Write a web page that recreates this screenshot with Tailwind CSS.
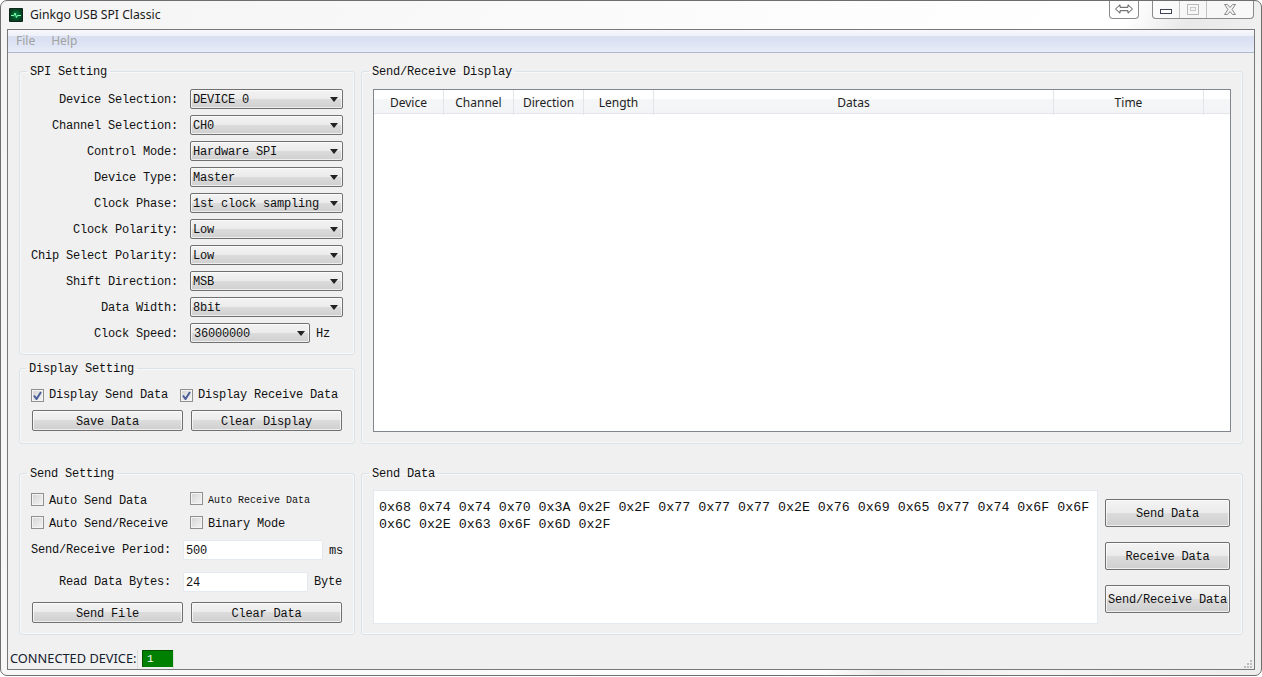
<!DOCTYPE html>
<html lang="en">
<head>
    <meta charset="UTF-8">
    <title>Ginkgo USB SPI Classic</title>
    <script src="https://cdn.jsdelivr.net/npm/@tailwindcss/browser@4"></script>
</head>
<body class="bg-white overflow-hidden">

<!-- Window frame -->
<div class="w-[1262px] h-[676px] border border-[#6e6e6e] rounded-[7px] flex flex-col overflow-hidden bg-[linear-gradient(115deg,#f4f4f4_0%,#fdfdfd_55%,#ffffff_72%,#e9e9e9_76%,#f6f6f6_85%,#ededed_100%)]">

    <!-- Title bar -->
    <div class="h-[28px] shrink-0 flex items-start text-[#1a1a1a] [font-family:'Noto_Sans',sans-serif]">
        <svg class="ml-[8px] mt-[7px]" width="14" height="14" viewBox="0 0 14 14">
            <defs><radialGradient id="lcd"><stop offset="0" stop-color="#0a8a48"/><stop offset="1" stop-color="#04401f"/></radialGradient></defs>
            <rect width="14" height="14" rx="1" fill="#10241a"/>
            <rect x="1" y="1" width="12" height="12" fill="url(#lcd)"/>
            <path d="M2 7.500h3l1-2.500 1.500 4.500 1-2h3.500" fill="none" stroke="#7dffb0" stroke-width="1"/>
        </svg>
        <span class="ml-[7px] mt-[5px] text-[12.2px] leading-[18px]">Ginkgo USB SPI Classic</span>
        <!-- Caption buttons -->
        <div class="ml-auto w-[30px] h-[19px] border border-t-0 border-[#8a8a8a] rounded-b-[4px] bg-white/60 flex items-center justify-center -mt-px">
            <svg width="18" height="10" viewBox="0 0 18 10"><path d="M.5 5 5 .8v2.500h8V.8L17.500 5 13 9.200V6.700H5v2.500z" fill="#fff" stroke="#555"/></svg>
        </div>
        <div class="ml-[13px] mr-[7px] w-[102px] h-[19px] border border-t-0 border-[#8a8a8a] rounded-b-[4px] bg-white/60 flex -mt-px">
            <div class="w-[27px] flex items-end justify-center pb-[4px] border-r border-[#c4c4c4]">
                <div class="w-[12px] h-[5px] border border-[#3d4456] bg-white"></div>
            </div>
            <div class="w-[27px] flex items-center justify-center border-r border-[#c4c4c4]">
                <div class="w-[12px] h-[11px] border border-[#b9b9b9] flex items-center justify-center">
                    <div class="w-[6px] h-[4px] border border-[#c8c8c8]"></div>
                </div>
            </div>
            <div class="flex-1 flex items-center justify-center">
                <svg width="12" height="11" viewBox="0 0 12 11"><path d="M.5.500h3L6 3.500 8.500.500h3L8 5.500l3.500 5h-3L6 7.500l-2.500 3h-3L4 5.500z" fill="#f4f4f4" stroke="#8a8a8a"/></svg>
            </div>
        </div>
    </div>

    <!-- Client area -->
    <div class="ml-[6px] w-[1248px] h-[641px] shrink-0 border border-[#787878] bg-[#f0f0f0] flex flex-col [font-family:'Liberation_Mono',monospace] text-[12px] tracking-[-0.2px] text-[#111]">

        <!-- Menu bar -->
        <div class="h-[23px] shrink-0 border-b border-[#b0b8cf] bg-[linear-gradient(#f6f8fc_0%,#eef1f9_25%,#d8dff2_30%,#dfe5f5_70%,#e8edf8_100%)] flex items-center gap-[16px] pl-[8px] pb-[1px] text-[12px] tracking-normal text-[#a2a2a2] [font-family:'Noto_Sans',sans-serif]">
            <span>File</span>
            <span>Help</span>
        </div>

        <div class="grid grid-cols-[336px_882px] gap-x-[6px] grid-rows-[380px_169px] gap-y-[22px] pl-[11px] pt-[11px]">

            <!-- Left column: SPI + Display -->
            <div class="flex flex-col gap-[6px]">
                <fieldset class="h-[291px] border border-[#d9e3ea] rounded-[3px] shadow-[inset_0_0_0_1px_#f8f8f8]">
                    <legend class="ml-[7px] px-[3px] h-[14px] leading-[16px]">SPI Setting</legend>
                    <div class="flex flex-col gap-[6px] pt-[11px]">
                        <div class="flex items-center"><label class="w-[158px] pt-[2px] text-right">Device Selection:</label><div class="ml-[12px] w-[153px] h-[20px] pl-[2px] pt-[2px] flex items-center justify-between border border-[#707070] rounded-[2px] bg-[linear-gradient(#f3f3f3,#ebebeb_50%,#dcdcdc_50%,#cfcfcf)] shadow-[inset_0_0_0_1px_#ffffffaa]">DEVICE 0<svg class="mr-[4px] -mt-[2px]" width="8" height="5" viewBox="0 0 8 5"><path d="M0 0h8L4 5z" fill="#222"/></svg></div></div>
                        <div class="flex items-center"><label class="w-[158px] pt-[2px] text-right">Channel Selection:</label><div class="ml-[12px] w-[153px] h-[20px] pl-[2px] pt-[2px] flex items-center justify-between border border-[#707070] rounded-[2px] bg-[linear-gradient(#f3f3f3,#ebebeb_50%,#dcdcdc_50%,#cfcfcf)] shadow-[inset_0_0_0_1px_#ffffffaa]">CH0<svg class="mr-[4px] -mt-[2px]" width="8" height="5" viewBox="0 0 8 5"><path d="M0 0h8L4 5z" fill="#222"/></svg></div></div>
                        <div class="flex items-center"><label class="w-[158px] pt-[2px] text-right">Control Mode:</label><div class="ml-[12px] w-[153px] h-[20px] pl-[2px] pt-[2px] flex items-center justify-between border border-[#707070] rounded-[2px] bg-[linear-gradient(#f3f3f3,#ebebeb_50%,#dcdcdc_50%,#cfcfcf)] shadow-[inset_0_0_0_1px_#ffffffaa]">Hardware SPI<svg class="mr-[4px] -mt-[2px]" width="8" height="5" viewBox="0 0 8 5"><path d="M0 0h8L4 5z" fill="#222"/></svg></div></div>
                        <div class="flex items-center"><label class="w-[158px] pt-[2px] text-right">Device Type:</label><div class="ml-[12px] w-[153px] h-[20px] pl-[2px] pt-[2px] flex items-center justify-between border border-[#707070] rounded-[2px] bg-[linear-gradient(#f3f3f3,#ebebeb_50%,#dcdcdc_50%,#cfcfcf)] shadow-[inset_0_0_0_1px_#ffffffaa]">Master<svg class="mr-[4px] -mt-[2px]" width="8" height="5" viewBox="0 0 8 5"><path d="M0 0h8L4 5z" fill="#222"/></svg></div></div>
                        <div class="flex items-center"><label class="w-[158px] pt-[2px] text-right">Clock Phase:</label><div class="ml-[12px] w-[153px] h-[20px] pl-[2px] pt-[2px] flex items-center justify-between border border-[#707070] rounded-[2px] bg-[linear-gradient(#f3f3f3,#ebebeb_50%,#dcdcdc_50%,#cfcfcf)] shadow-[inset_0_0_0_1px_#ffffffaa]">1st clock sampling<svg class="mr-[4px] -mt-[2px]" width="8" height="5" viewBox="0 0 8 5"><path d="M0 0h8L4 5z" fill="#222"/></svg></div></div>
                        <div class="flex items-center"><label class="w-[158px] pt-[2px] text-right">Clock Polarity:</label><div class="ml-[12px] w-[153px] h-[20px] pl-[2px] pt-[2px] flex items-center justify-between border border-[#707070] rounded-[2px] bg-[linear-gradient(#f3f3f3,#ebebeb_50%,#dcdcdc_50%,#cfcfcf)] shadow-[inset_0_0_0_1px_#ffffffaa]">Low<svg class="mr-[4px] -mt-[2px]" width="8" height="5" viewBox="0 0 8 5"><path d="M0 0h8L4 5z" fill="#222"/></svg></div></div>
                        <div class="flex items-center"><label class="w-[158px] pt-[2px] text-right">Chip Select Polarity:</label><div class="ml-[12px] w-[153px] h-[20px] pl-[2px] pt-[2px] flex items-center justify-between border border-[#707070] rounded-[2px] bg-[linear-gradient(#f3f3f3,#ebebeb_50%,#dcdcdc_50%,#cfcfcf)] shadow-[inset_0_0_0_1px_#ffffffaa]">Low<svg class="mr-[4px] -mt-[2px]" width="8" height="5" viewBox="0 0 8 5"><path d="M0 0h8L4 5z" fill="#222"/></svg></div></div>
                        <div class="flex items-center"><label class="w-[158px] pt-[2px] text-right">Shift Direction:</label><div class="ml-[12px] w-[153px] h-[20px] pl-[2px] pt-[2px] flex items-center justify-between border border-[#707070] rounded-[2px] bg-[linear-gradient(#f3f3f3,#ebebeb_50%,#dcdcdc_50%,#cfcfcf)] shadow-[inset_0_0_0_1px_#ffffffaa]">MSB<svg class="mr-[4px] -mt-[2px]" width="8" height="5" viewBox="0 0 8 5"><path d="M0 0h8L4 5z" fill="#222"/></svg></div></div>
                        <div class="flex items-center"><label class="w-[158px] pt-[2px] text-right">Data Width:</label><div class="ml-[12px] w-[153px] h-[20px] pl-[2px] pt-[2px] flex items-center justify-between border border-[#707070] rounded-[2px] bg-[linear-gradient(#f3f3f3,#ebebeb_50%,#dcdcdc_50%,#cfcfcf)] shadow-[inset_0_0_0_1px_#ffffffaa]">8bit<svg class="mr-[4px] -mt-[2px]" width="8" height="5" viewBox="0 0 8 5"><path d="M0 0h8L4 5z" fill="#222"/></svg></div></div>
                        <div class="flex items-center"><label class="w-[158px] pt-[2px] text-right">Clock Speed:</label><div class="ml-[12px] w-[120px] h-[20px] pl-[3px] pt-[2px] flex items-center justify-between border border-[#707070] rounded-[2px] bg-[linear-gradient(#f3f3f3,#ebebeb_50%,#dcdcdc_50%,#cfcfcf)] shadow-[inset_0_0_0_1px_#ffffffaa]">36000000<svg class="mr-[4px] -mt-[2px]" width="8" height="5" viewBox="0 0 8 5"><path d="M0 0h8L4 5z" fill="#222"/></svg></div><span class="ml-[6px] pt-[2px]">Hz</span></div>
                    </div>
                </fieldset>

                <fieldset class="h-[83px] border border-[#d9e3ea] rounded-[3px] shadow-[inset_0_0_0_1px_#f8f8f8]">
                    <legend class="ml-[6px] px-[3px] h-[14px] leading-[16px]">Display Setting</legend>
                    <div class="flex items-center pt-[11px] pl-[11px]">
                        <span class="w-[13px] h-[13px] border border-[#8e8f8f] bg-[linear-gradient(135deg,#d4d4d4,#f4f4f4)] shadow-[inset_0_0_0_1px_#f4f4f4] flex items-center justify-center"><svg width="9" height="9" viewBox="0 0 9 9"><path d="M1 4.500 3.500 8 8 1" fill="none" stroke="#4a5f97" stroke-width="2"/></svg></span>
                        <span class="ml-[5px] w-[131px]">Display Send Data</span>
                        <span class="w-[13px] h-[13px] border border-[#8e8f8f] bg-[linear-gradient(135deg,#d4d4d4,#f4f4f4)] shadow-[inset_0_0_0_1px_#f4f4f4] flex items-center justify-center"><svg width="9" height="9" viewBox="0 0 9 9"><path d="M1 4.500 3.500 8 8 1" fill="none" stroke="#4a5f97" stroke-width="2"/></svg></span>
                        <span class="ml-[5px]">Display Receive Data</span>
                    </div>
                    <div class="flex gap-[8px] pl-[12px] pt-[6px]">
                        <button class="w-[151px] h-[21px] pt-[2px] border border-[#707070] rounded-[2px] bg-[linear-gradient(#f3f3f3,#ebebeb_50%,#dcdcdc_50%,#cfcfcf)] shadow-[inset_0_0_0_1px_#ffffffaa]">Save Data</button>
                        <button class="w-[151px] h-[21px] pt-[2px] border border-[#707070] rounded-[2px] bg-[linear-gradient(#f3f3f3,#ebebeb_50%,#dcdcdc_50%,#cfcfcf)] shadow-[inset_0_0_0_1px_#ffffffaa]">Clear Display</button>
                    </div>
                </fieldset>
            </div>

            <!-- Send/Receive display -->
            <fieldset class="h-[380px] border border-[#d9e3ea] rounded-[3px] shadow-[inset_0_0_0_1px_#f8f8f8]">
                <legend class="ml-[7px] px-[3px] h-[14px] leading-[16px]">Send/Receive Display</legend>
                <div class="mt-[11px] ml-[11px] w-[858px] h-[343px] border border-[#82878f] bg-white">
                    <div class="grid grid-cols-[70px_70px_70px_70px_400px_150px_26px] h-[24px] border-b border-[#e4e6e9] bg-[linear-gradient(#fff_0%,#fff_40%,#f5f6f7_40%,#f3f4f6_100%)] text-center text-[12px] leading-[25px] tracking-normal text-[#1e1e1e] [font-family:'Noto_Sans',sans-serif]">
                        <div class="border-r border-[#e3e5e8]">Device</div>
                        <div class="border-r border-[#e3e5e8]">Channel</div>
                        <div class="border-r border-[#e3e5e8]">Direction</div>
                        <div class="border-r border-[#e3e5e8]">Length</div>
                        <div class="border-r border-[#e3e5e8]">Datas</div>
                        <div class="border-r border-[#e3e5e8]">Time</div>
                        <div></div>
                    </div>
                </div>
            </fieldset>

            <!-- Send setting -->
            <fieldset class="h-[169px] border border-[#d9e3ea] rounded-[3px] shadow-[inset_0_0_0_1px_#f8f8f8]">
                <legend class="ml-[7px] px-[3px] h-[14px] leading-[16px]">Send Setting</legend>
                <div class="flex items-center pt-[12px] pl-[11px] h-[27px]">
                    <span class="w-[13px] h-[13px] border border-[#8e8f8f] bg-[linear-gradient(135deg,#d4d4d4,#f4f4f4)] shadow-[inset_0_0_0_1px_#f4f4f4]"></span>
                    <span class="ml-[5px] w-[141px] pt-[2px]">Auto Send Data</span>
                    <span class="w-[13px] h-[13px] -mt-[2px] border border-[#8e8f8f] bg-[linear-gradient(135deg,#d4d4d4,#f4f4f4)] shadow-[inset_0_0_0_1px_#f4f4f4]"></span>
                    <span class="ml-[5px] pt-[1px] text-[10px] tracking-normal">Auto Receive Data</span>
                </div>
                <div class="flex items-center pt-[9px] pl-[11px] h-[22px]">
                    <span class="w-[13px] h-[13px] border border-[#8e8f8f] bg-[linear-gradient(135deg,#d4d4d4,#f4f4f4)] shadow-[inset_0_0_0_1px_#f4f4f4]"></span>
                    <span class="ml-[5px] w-[141px] pt-[2px]">Auto Send/Receive</span>
                    <span class="w-[13px] h-[13px] border border-[#8e8f8f] bg-[linear-gradient(135deg,#d4d4d4,#f4f4f4)] shadow-[inset_0_0_0_1px_#f4f4f4]"></span>
                    <span class="ml-[5px] pt-[2px]">Binary Mode</span>
                </div>
                <div class="flex items-center mt-[11px] h-[20px]">
                    <label class="w-[151px] text-right">Send/Receive Period:</label>
                    <div class="ml-[12px] w-[140px] h-[20px] pl-[2px] leading-[21px] bg-white border border-[#e3e9ef] rounded-[2px]">500</div>
                    <span class="ml-[6px] pt-[2px]">ms</span>
                </div>
                <div class="flex items-center mt-[12px] h-[20px]">
                    <label class="w-[151px] text-right">Read Data Bytes:</label>
                    <div class="ml-[12px] w-[125px] h-[20px] pl-[2px] leading-[21px] bg-white border border-[#e3e9ef] rounded-[2px]">24</div>
                    <span class="ml-[6px]">Byte</span>
                </div>
                <div class="flex gap-[8px] pl-[12px] pt-[10px]">
                    <button class="w-[151px] h-[21px] pt-[2px] border border-[#707070] rounded-[2px] bg-[linear-gradient(#f3f3f3,#ebebeb_50%,#dcdcdc_50%,#cfcfcf)] shadow-[inset_0_0_0_1px_#ffffffaa]">Send File</button>
                    <button class="w-[151px] h-[21px] pt-[2px] border border-[#707070] rounded-[2px] bg-[linear-gradient(#f3f3f3,#ebebeb_50%,#dcdcdc_50%,#cfcfcf)] shadow-[inset_0_0_0_1px_#ffffffaa]">Clear Data</button>
                </div>
            </fieldset>

            <!-- Send data -->
            <fieldset class="h-[169px] border border-[#d9e3ea] rounded-[3px] shadow-[inset_0_0_0_1px_#f8f8f8]">
                <legend class="ml-[7px] px-[3px] h-[14px] leading-[16px]">Send Data</legend>
                <div class="flex pl-[11px] pt-[10px]">
                    <div class="w-[725px] h-[134px] bg-white border border-[#e3e9ef] px-[5px] pt-[8px] text-[13.3px] tracking-normal leading-[17px]">0x68 0x74 0x74 0x70 0x3A 0x2F 0x2F 0x77 0x77 0x77 0x2E 0x76 0x69 0x65 0x77 0x74 0x6F 0x6F 0x6C 0x2E 0x63 0x6F 0x6D 0x2F</div>
                    <div class="ml-[7px] pt-[9px] flex flex-col gap-[15px]">
                        <button class="w-[125px] h-[28px] pt-[2px] border border-[#707070] rounded-[2px] bg-[linear-gradient(#f3f3f3,#ebebeb_50%,#dcdcdc_50%,#cfcfcf)] shadow-[inset_0_0_0_1px_#ffffffaa]">Send Data</button>
                        <button class="w-[125px] h-[28px] pt-[2px] border border-[#707070] rounded-[2px] bg-[linear-gradient(#f3f3f3,#ebebeb_50%,#dcdcdc_50%,#cfcfcf)] shadow-[inset_0_0_0_1px_#ffffffaa]">Receive Data</button>
                        <button class="w-[125px] h-[28px] pt-[2px] border border-[#707070] rounded-[2px] bg-[linear-gradient(#f3f3f3,#ebebeb_50%,#dcdcdc_50%,#cfcfcf)] shadow-[inset_0_0_0_1px_#ffffffaa]">Send/Receive Data</button>
                    </div>
                </div>
            </fieldset>
        </div>

        <!-- Status bar -->
        <div class="mt-auto h-[21px] flex items-center pl-[2px] pt-[1px] text-[12.8px] tracking-normal text-[#14202e] [font-family:'Noto_Sans',sans-serif]">
            <span class="w-[127px] whitespace-nowrap">CONNECTED DEVICE:</span>
            <div class="h-[19px] pl-[4px] border-x border-[#dedede]">
                <div class="w-[31px] h-[17px] bg-[#008000] border-l border-t border-[#005400] pl-[4px] text-white text-[11px] leading-[16px] [font-family:'Liberation_Mono',monospace]">1</div>
            </div>
            <svg class="ml-auto mr-[2px] self-end mb-[1px]" width="8" height="8" viewBox="0 0 8 8" fill="#bdbdbd">
                <rect x="6" y="0" width="2" height="2"/><rect x="6" y="3" width="2" height="2"/><rect x="3" y="3" width="2" height="2"/><rect x="6" y="6" width="2" height="2"/><rect x="3" y="6" width="2" height="2"/><rect x="0" y="6" width="2" height="2"/>
            </svg>
        </div>
    </div>
</div>

</body>
</html>
